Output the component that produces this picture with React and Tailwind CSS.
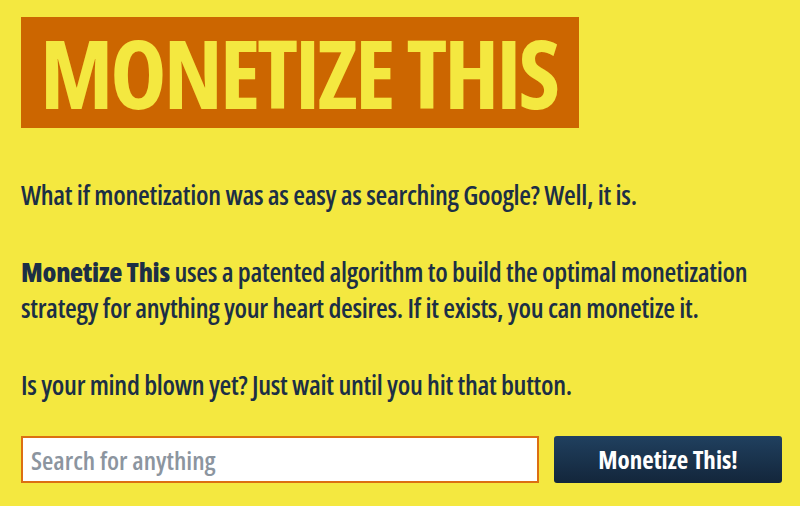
export default function App() {
  return (
    <div className="min-h-screen bg-[#f4e840] pl-[21px] pr-[18px] pt-[17px] font-['Open_Sans',sans-serif] font-stretch-[75%] text-[#1c2f45]">
      <h1 className="inline-block bg-[#cc6600] pl-[19px] pr-[22px] text-[95px] font-bold leading-[111px] tracking-[-3px] text-[#f4e840]">
        MONETIZE THIS
      </h1>

      <div className="mt-[49px] text-[27px] font-semibold leading-[36px] tracking-[-0.3px]">
        <p>What if monetization was as easy as searching Google? Well, it is.</p>
        <p className="mt-[41px]">
          <strong className="font-extrabold">Monetize This</strong> uses a patented algorithm to build the optimal monetization
          strategy for anything your heart desires. If it exists, you can monetize it.
        </p>
        <p className="mt-[41px]">Is your mind blown yet? Just wait until you hit that button.</p>
      </div>

      <form className="mt-[33px] flex gap-[15px]" onSubmit={(e) => e.preventDefault()}>
        <input
          type="text"
          placeholder="Search for anything"
          className="h-[47px] w-[518px] border-2 border-[#dc6f12] bg-white px-2 text-[26px] font-semibold text-[#1c2f45] outline-none placeholder:text-[#8c959f]"
        />
        <button
          type="submit"
          className="h-[47px] w-[228px] rounded-[3px] bg-gradient-to-b from-[#20405f] to-[#13263b] text-[25px] font-bold text-white"
        >
          Monetize This!
        </button>
      </form>
    </div>
  );
}
